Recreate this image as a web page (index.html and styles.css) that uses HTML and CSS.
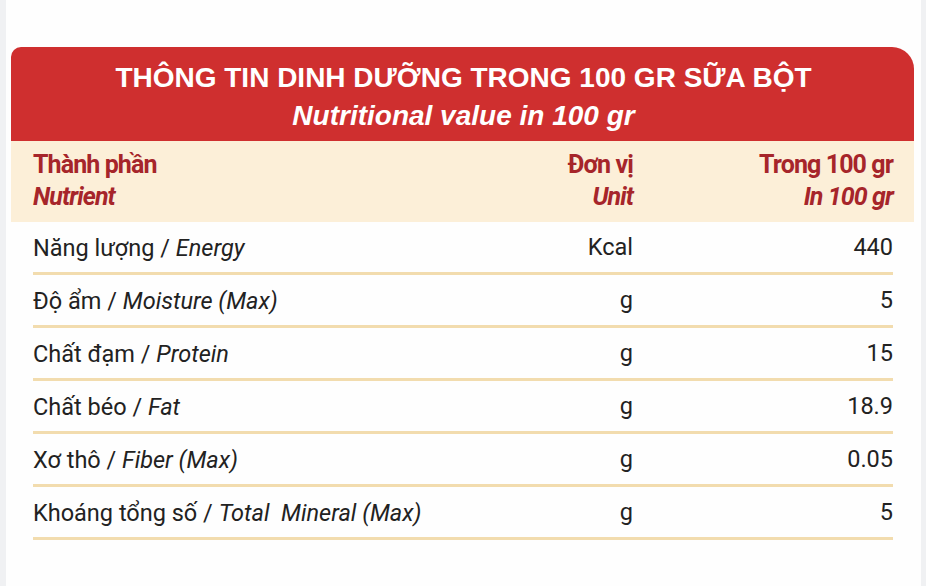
FILE: index.html
```html
<!DOCTYPE html>
<html lang="vi">
<head>
<meta charset="utf-8">
<link rel="stylesheet" href="styles.css">
</head>
<body>
<div class="page">
  <div class="card">
    <div class="title">
      <div class="title-vi">THÔNG TIN DINH DƯỠNG TRONG 100 GR SỮA BỘT</div>
      <div class="title-en">Nutritional value in 100 gr</div>
    </div>
    <div class="head">
      <div class="c-name"><div class="vi">Thành phần</div><div class="en">Nutrient</div></div>
      <div class="c-unit"><div class="vi">Đơn vị</div><div class="en">Unit</div></div>
      <div class="c-val"><div class="vi">Trong 100 gr</div><div class="en">In 100 gr</div></div>
    </div>
    <div class="rows">
      <div class="row"><div class="c-name">Năng lượng / <i>Energy</i></div><div class="c-unit">Kcal</div><div class="c-val">440</div></div>
      <div class="row"><div class="c-name">Độ ẩm / <i>Moisture (Max)</i></div><div class="c-unit">g</div><div class="c-val">5</div></div>
      <div class="row"><div class="c-name">Chất đạm / <i>Protein</i></div><div class="c-unit">g</div><div class="c-val">15</div></div>
      <div class="row"><div class="c-name">Chất béo / <i>Fat</i></div><div class="c-unit">g</div><div class="c-val">18.9</div></div>
      <div class="row"><div class="c-name">Xơ thô / <i>Fiber (Max)</i></div><div class="c-unit">g</div><div class="c-val">0.05</div></div>
      <div class="row"><div class="c-name">Khoáng tổng số / <i>Total&nbsp; Mineral (Max)</i></div><div class="c-unit">g</div><div class="c-val">5</div></div>
    </div>
  </div>
</div>
</body>
</html>
```
FILE: styles.css
```css
html, body {
  margin: 0;
  padding: 0;
}
body {
  background: #f0f1f3;
  font-family: Roboto, "Liberation Sans", sans-serif;
}
.page {
  background: #fefefe;
  margin: 0 5px 0 6px;
  height: 586px;
  padding-top: 47px;
  box-sizing: border-box;
}
.card {
  margin-left: 5px;
  width: 903px;
}
.title {
  background: #cf2f2f;
  border-radius: 10px 22px 0 0;
  height: 94px;
  box-sizing: border-box;
  padding-top: 12px;
  text-align: center;
  color: #fff;
  font-family: "Liberation Sans", Arial, sans-serif;
  font-weight: bold;
}
.title-vi {
  font-size: 28px;
  line-height: 38px;
  padding-left: 2px;
}
.title-en {
  font-size: 28px;
  font-style: italic;
  line-height: 38px;
  padding-left: 2px;
}
.head {
  background: #fcefd8;
  height: 81px;
  display: flex;
  align-items: flex-start;
  padding: 8px 21px 0 22px;
  box-sizing: border-box;
  color: #a6252a;
  font-weight: bold;
  font-size: 25px;
  letter-spacing: -0.9px;
  line-height: 32px;
}
.head .en {
  font-style: italic;
}
.c-name { flex: 1; }
.c-unit { width: 130px; text-align: right; }
.c-val { width: 260px; text-align: right; }
.rows {
  padding: 0 21px 0 22px;
}
.row {
  display: flex;
  align-items: center;
  height: 50px;
  border-bottom: 3px solid #f2dcae;
  font-size: 23.5px;
  color: #222;
  letter-spacing: 0;
}
.row .c-name {
  padding-top: 2px;
}
```
